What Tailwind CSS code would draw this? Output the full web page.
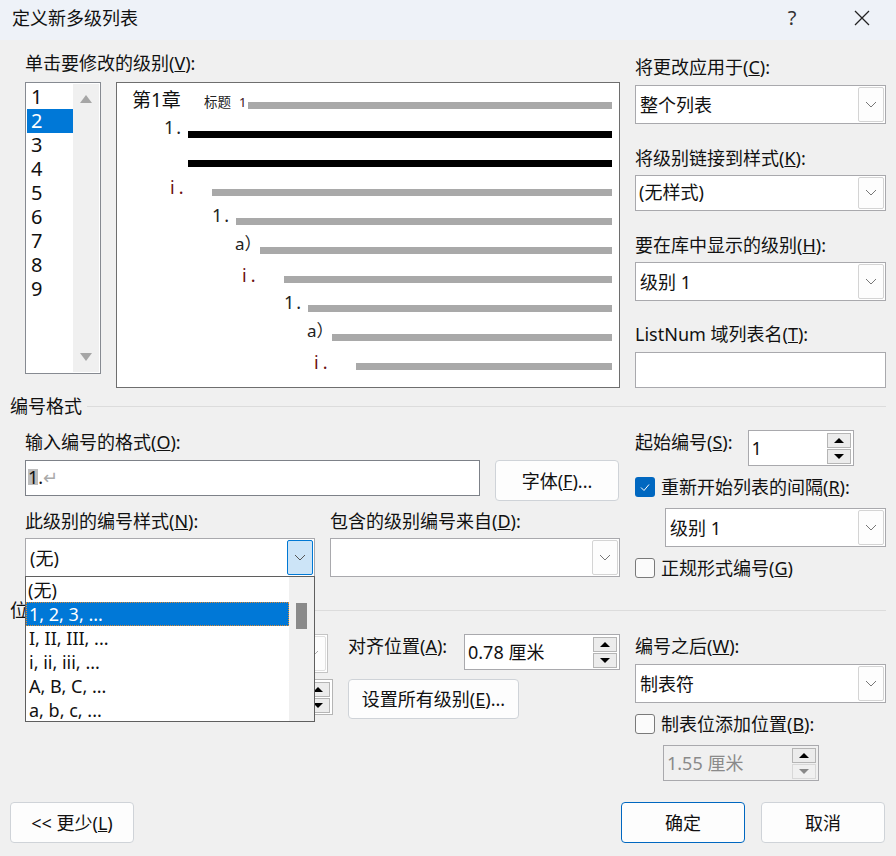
<!DOCTYPE html>
<html lang="zh-CN">
<head>
<meta charset="UTF-8">
<title>定义新多级列表</title>
<script src="https://cdn.jsdelivr.net/npm/@tailwindcss/browser@4"></script>
</head>
<body class="m-0 bg-[#f0f0f0]">
<div class="relative w-[896px] h-[856px] overflow-hidden bg-[#f0f0f0] text-[18px] leading-[24px] text-[#111] font-['Noto_Sans','Noto_Sans_CJK_SC',sans-serif]">

  <!-- title bar -->
  <div class="h-10 bg-[#eef2f8] flex items-center pl-3 pb-[5px]">
    <span class="flex-1">定义新多级列表</span>
    <span class="w-6 text-center text-[20px] text-[#333] mr-[50px]">?</span>
    <svg class="w-4 h-4 mr-[26px]" viewBox="0 0 16 16" fill="none" stroke="#222" stroke-width="1.3"><path d="M1 1l14 14M15 1L1 15"/></svg>
  </div>

  <!-- levels + preview + right fields -->
  <div class="flex pl-[25px] pt-[15px] gap-[15px]">
    <div class="w-[595px] shrink-0 -mt-[4px]">
      <div class="h-6 mb-[7px]">单击要修改的级别(<u>V</u>):</div>
      <div class="flex items-start gap-[15px]">
        <div class="w-[76px] h-[292px] bg-white border border-[#868a91] flex p-[1px] text-[20px]">
          <div class="flex-1 pt-[1px]">
            <div class="h-6 pl-[4px]">1</div>
            <div class="h-6 pl-[4px] bg-[#0078d7] text-white">2</div>
            <div class="h-6 pl-[4px]">3</div>
            <div class="h-6 pl-[4px]">4</div>
            <div class="h-6 pl-[4px]">5</div>
            <div class="h-6 pl-[4px]">6</div>
            <div class="h-6 pl-[4px]">7</div>
            <div class="h-6 pl-[4px]">8</div>
            <div class="h-6 pl-[4px]">9</div>
          </div>
          <div class="w-[26px] bg-[#f0f0f0] flex flex-col justify-between items-center py-[11px]">
            <svg class="w-3 h-2" viewBox="0 0 12 8" fill="#a6a6a6"><path d="M6 0l6 8H0z"/></svg>
            <svg class="w-3 h-2" viewBox="0 0 12 8" fill="#a6a6a6"><path d="M0 0h12L6 8z"/></svg>
          </div>
        </div>
        <div class="w-[504px] h-[306px] bg-white border border-[#6e6e6e] relative text-[#222]">
          <span class="absolute left-[15px] top-[5px] text-[19px] text-[#111]">第1章</span>
          <span class="absolute left-[87px] top-[7px] text-[13.5px]">标题</span>
          <span class="absolute left-[122px] top-[7px] text-[13px] text-[#401020]">1</span>
          <div class="absolute left-[131px] right-[7px] top-[19px] h-[7px] bg-[#a9a9a9]"></div>

          <span class="absolute left-[47px] top-[32px] tracking-[2px]">1.</span>
          <div class="absolute left-[71px] right-[7px] top-[48px] h-[7px] bg-black"></div>
          <div class="absolute left-[71px] right-[7px] top-[77px] h-[7px] bg-black"></div>

          <span class="absolute left-[53px] top-[92px] tracking-[4px] text-[#6b0f0f]">i.</span>
          <div class="absolute left-[95px] right-[7px] top-[106px] h-[7px] bg-[#a9a9a9]"></div>

          <span class="absolute left-[95px] top-[120px] tracking-[2px]">1.</span>
          <div class="absolute left-[119px] right-[7px] top-[135px] h-[7px] bg-[#a9a9a9]"></div>

          <span class="absolute left-[118px] top-[149px] text-[17px]">a）</span>
          <div class="absolute left-[143px] right-[7px] top-[164px] h-[7px] bg-[#a9a9a9]"></div>

          <span class="absolute left-[125px] top-[180px] tracking-[4px] text-[#6b0f0f]">i.</span>
          <div class="absolute left-[167px] right-[7px] top-[193px] h-[7px] bg-[#a9a9a9]"></div>

          <span class="absolute left-[167px] top-[207px] tracking-[2px]">1.</span>
          <div class="absolute left-[191px] right-[7px] top-[222px] h-[7px] bg-[#a9a9a9]"></div>

          <span class="absolute left-[190px] top-[236px] text-[17px]">a）</span>
          <div class="absolute left-[215px] right-[7px] top-[251px] h-[7px] bg-[#a9a9a9]"></div>

          <span class="absolute left-[197px] top-[267px] tracking-[4px] text-[#6b0f0f]">i.</span>
          <div class="absolute left-[239px] right-[7px] top-[280px] h-[7px] bg-[#a9a9a9]"></div>
        </div>
      </div>
    </div>

    <div class="w-[251px] shrink-0">
      <div class="h-6 mb-[6px]">将更改应用于(<u>C</u>):</div>
      <div class="h-[39px] bg-white border border-[#a9a9ad] flex items-center pl-[4px] pr-[1px] mb-[22px]">
        <span class="flex-1">整个列表</span>
        <div class="w-[26px] h-[35px] bg-[#fdfdfd] border border-[#d4d4d4] rounded-[2px] flex items-center justify-center">
          <svg class="w-3 h-2" viewBox="0 0 12 8" fill="none" stroke="#777"><path d="M1 1l5 5 5-5"/></svg>
        </div>
      </div>
      <div class="h-6 mb-[5px]">将级别链接到样式(<u>K</u>):</div>
      <div class="h-[36px] bg-white border border-[#a9a9ad] flex items-center pl-[3px] pr-[1px] mb-[22px]">
        <span class="flex-1 pb-[3px]">(无样式)</span>
        <div class="w-[26px] h-[32px] bg-[#fdfdfd] border border-[#d4d4d4] rounded-[2px] flex items-center justify-center">
          <svg class="w-3 h-2" viewBox="0 0 12 8" fill="none" stroke="#777"><path d="M1 1l5 5 5-5"/></svg>
        </div>
      </div>
      <div class="h-6 mb-[5px]">要在库中显示的级别(<u>H</u>):</div>
      <div class="h-[39px] bg-white border border-[#a9a9ad] flex items-center pl-[4px] pr-[1px] mb-[21px]">
        <span class="flex-1">级别 1</span>
        <div class="w-[26px] h-[35px] bg-[#fdfdfd] border border-[#d4d4d4] rounded-[2px] flex items-center justify-center">
          <svg class="w-3 h-2" viewBox="0 0 12 8" fill="none" stroke="#777"><path d="M1 1l5 5 5-5"/></svg>
        </div>
      </div>
      <div class="h-6 mb-[6px]">ListNum 域列表名(<u>T</u>):</div>
      <div class="h-[36px] bg-white border border-[#a9a9ad]"></div>
    </div>
  </div>

  <!-- number format -->
  <div class="flex items-center gap-[5px] pl-[10px] pr-[10px] mt-[6px] h-6">
    <span>编号格式</span>
    <div class="flex-1 h-[1px] bg-[#dcdcdc]"></div>
  </div>
  <div class="flex pl-[25px] pt-[12px] gap-[15px]">
    <div class="w-[595px] shrink-0">
      <div class="h-6 mb-[6px]">输入编号的格式(<u>O</u>):</div>
      <div class="flex gap-[15px] items-start">
        <div class="w-[455px] h-[36px] bg-white border border-[#7d8188] pl-[2px] pt-[8px] flex items-start leading-[16px]">
          <span class="bg-[#bdbdbd] h-[16px]">1</span><span class="h-[16px]">.</span><span class="h-[16px] text-[#aaa]">↵</span>
        </div>
        <div class="w-[124px] h-[41px] bg-[#fdfdfd] border border-[#cfd3d8] rounded-[4px] flex items-center justify-center">字体(<u>F</u>)...</div>
      </div>
      <div class="flex gap-[15px] mt-[8px]">
        <div class="w-[290px] shrink-0">
          <div class="h-6 mb-[5px]">此级别的编号样式(<u>N</u>):</div>
          <div class="h-[39px] bg-white border border-[#a9a9ad] flex items-center pl-[4px] pr-[1px]">
            <span class="flex-1">(无)</span>
            <div class="w-[26px] h-[35px] bg-[#cce4f7] border border-[#0078d4] rounded-[2px] flex items-center justify-center">
              <svg class="w-3 h-2" viewBox="0 0 12 8" fill="none" stroke="#555"><path d="M1 1l5 5 5-5"/></svg>
            </div>
          </div>
        </div>
        <div class="w-[290px] shrink-0">
          <div class="h-6 mb-[5px]">包含的级别编号来自(<u>D</u>):</div>
          <div class="h-[39px] bg-white border border-[#a9a9ad] flex items-center justify-end pr-[1px]">
            <div class="w-[26px] h-[35px] bg-[#fdfdfd] border border-[#d4d4d4] rounded-[2px] flex items-center justify-center">
              <svg class="w-3 h-2" viewBox="0 0 12 8" fill="none" stroke="#777"><path d="M1 1l5 5 5-5"/></svg>
            </div>
          </div>
        </div>
      </div>
    </div>

    <div class="w-[251px] shrink-0">
      <div class="flex items-start gap-[15px] mb-[9px]">
        <span class="h-6">起始编号(<u>S</u>):</span>
        <div class="w-[106px] h-[36px] bg-white border border-[#a9a9ad] flex items-center pl-[3px] pr-[2px]">
          <span class="flex-1">1</span>
          <div class="flex flex-col w-[24px] gap-[1px]">
            <div class="h-[15px] bg-[#ececec] border border-[#b5b5b5] flex items-center justify-center"><svg class="w-[10px] h-[5px]" viewBox="0 0 10 5"><path d="M5 0l5 5H0z"/></svg></div>
            <div class="h-[15px] bg-[#ececec] border border-[#b5b5b5] flex items-center justify-center"><svg class="w-[10px] h-[5px]" viewBox="0 0 10 5"><path d="M0 0h10L5 5z"/></svg></div>
          </div>
        </div>
      </div>
      <div class="flex items-center gap-[6px] h-6 mb-[9px]">
        <div class="w-5 h-5 bg-[#0067c0] rounded-[3px] flex items-center justify-center">
          <svg class="w-3 h-3" viewBox="0 0 12 12" fill="none" stroke="#fff"><path d="M2 6.500l3 3 5-6"/></svg>
        </div>
        <span>重新开始列表的间隔(<u>R</u>):</span>
      </div>
      <div class="ml-[30px] h-[39px] bg-white border border-[#a9a9ad] flex items-center pl-[4px] pr-[1px] mb-[9px]">
        <span class="flex-1">级别 1</span>
        <div class="w-[26px] h-[35px] bg-[#fdfdfd] border border-[#d4d4d4] rounded-[2px] flex items-center justify-center">
          <svg class="w-3 h-2" viewBox="0 0 12 8" fill="none" stroke="#777"><path d="M1 1l5 5 5-5"/></svg>
        </div>
      </div>
      <div class="flex items-center gap-[6px] h-6">
        <div class="w-5 h-5 bg-[#fbfbfb] border border-[#7a7a7a] rounded-[3px]"></div>
        <span>正规形式编号(<u>G</u>)</span>
      </div>
    </div>
  </div>

  <!-- position -->
  <div class="flex items-center gap-[5px] pl-[10px] pr-[10px] mt-[18px] h-6">
    <span>位置</span>
    <div class="flex-1 h-[1px] bg-[#dcdcdc]"></div>
  </div>
  <div class="flex pl-[25px] pt-[12px] gap-[15px]">
    <div class="w-[595px] shrink-0 flex">
      <!-- these two sit mostly behind the open dropdown -->
      <div class="w-[323px] shrink-0 flex flex-col items-end">
        <div class="w-[100px] h-[39px] mr-[20px] bg-white border border-[#c4c4c4] flex items-center justify-end pr-[1px]">
          <div class="w-[26px] h-[35px] bg-[#fdfdfd] border border-[#e0e0e0] rounded-[2px] flex items-center justify-center">
            <svg class="w-3 h-2" viewBox="0 0 12 8" fill="none" stroke="#aaa"><path d="M1 1l5 5 5-5"/></svg>
          </div>
        </div>
        <div class="w-[100px] h-[36px] mt-[6px] mr-[15px] bg-white border border-[#b5b5b5] flex items-center justify-end pr-[2px]">
          <div class="flex flex-col w-[24px] gap-[1px]">
            <div class="h-[15px] bg-[#ececec] border border-[#b5b5b5] flex items-center justify-center"><svg class="w-[10px] h-[5px]" viewBox="0 0 10 5"><path d="M5 0l5 5H0z"/></svg></div>
            <div class="h-[15px] bg-[#ececec] border border-[#b5b5b5] flex items-center justify-center"><svg class="w-[10px] h-[5px]" viewBox="0 0 10 5"><path d="M0 0h10L5 5z"/></svg></div>
          </div>
        </div>
      </div>
      <div class="w-[272px]">
        <div class="flex items-start h-[36px]">
          <span class="w-[116px] shrink-0">对齐位置(<u>A</u>):</span>
          <div class="w-[156px] h-[36px] bg-white border border-[#a9a9ad] flex items-center pl-[3px] pr-[2px]">
            <span class="flex-1">0.78 厘米</span>
            <div class="flex flex-col w-[24px] gap-[1px]">
              <div class="h-[15px] bg-[#ececec] border border-[#b5b5b5] flex items-center justify-center"><svg class="w-[10px] h-[5px]" viewBox="0 0 10 5"><path d="M5 0l5 5H0z"/></svg></div>
              <div class="h-[15px] bg-[#ececec] border border-[#b5b5b5] flex items-center justify-center"><svg class="w-[10px] h-[5px]" viewBox="0 0 10 5"><path d="M0 0h10L5 5z"/></svg></div>
            </div>
          </div>
        </div>
        <div class="w-[171px] h-[40px] mt-[9px] bg-[#fdfdfd] border border-[#cfd3d8] rounded-[4px] flex items-center justify-center">设置所有级别(<u>E</u>)...</div>
      </div>
    </div>
    <div class="w-[251px] shrink-0">
      <div class="h-6 mb-[6px]">编号之后(<u>W</u>):</div>
      <div class="h-[39px] bg-white border border-[#a9a9ad] flex items-center pl-[4px] pr-[1px] mb-[9px]">
        <span class="flex-1">制表符</span>
        <div class="w-[26px] h-[35px] bg-[#fdfdfd] border border-[#d4d4d4] rounded-[2px] flex items-center justify-center">
          <svg class="w-3 h-2" viewBox="0 0 12 8" fill="none" stroke="#777"><path d="M1 1l5 5 5-5"/></svg>
        </div>
      </div>
      <div class="flex items-center gap-[6px] h-6 mb-[9px]">
        <div class="w-5 h-5 bg-[#fbfbfb] border border-[#7a7a7a] rounded-[3px]"></div>
        <span>制表位添加位置(<u>B</u>):</span>
      </div>
      <div class="ml-[28px] w-[156px] h-[36px] bg-[#f0f0f0] border border-[#a9a9ad] flex items-center pl-[3px] pr-[2px] text-[#8a8a8a]">
        <span class="flex-1">1.55 厘米</span>
        <div class="flex flex-col w-[24px] gap-[1px]">
          <div class="h-[15px] bg-[#ececec] border border-[#b5b5b5] flex items-center justify-center"><svg class="w-[10px] h-[5px]" viewBox="0 0 10 5"><path d="M5 0l5 5H0z"/></svg></div>
          <div class="h-[15px] bg-[#f0f0f0] border border-[#d8d8d8] flex items-center justify-center"><svg class="w-[10px] h-[5px]" viewBox="0 0 10 5" fill="#888"><path d="M0 0h10L5 5z"/></svg></div>
        </div>
      </div>
    </div>
  </div>

  <!-- footer buttons -->
  <div class="absolute left-[10px] right-[11px] bottom-[13px] flex items-center">
    <div class="w-[124px] h-[41px] bg-[#fdfdfd] border border-[#cfd3d8] rounded-[4px] flex items-center justify-center">&lt;&lt; 更少(<u>L</u>)</div>
    <div class="flex-1"></div>
    <div class="w-[124px] h-[41px] bg-[#fdfdfd] border border-[#0067c0] rounded-[4px] flex items-center justify-center">确定</div>
    <div class="w-[124px] h-[41px] ml-[16px] bg-[#fdfdfd] border border-[#cfd3d8] rounded-[4px] flex items-center justify-center">取消</div>
  </div>

  <!-- open dropdown -->
  <div class="absolute left-[25px] top-[576px] w-[290px] h-[146px] bg-white border border-[#5f5f5f] flex z-10">
    <div class="flex-1 pt-[1px]">
      <div class="h-6 pl-[2px]">(无)</div>
      <div class="h-6 pl-[3px] bg-[#0078d7] text-white outline-1 -outline-offset-1 outline-dotted outline-[#e08a30]">1, 2, 3, ...</div>
      <div class="h-6 pl-[3px]">I, II, III, ...</div>
      <div class="h-6 pl-[3px]">i, ii, iii, ...</div>
      <div class="h-6 pl-[3px]">A, B, C, ...</div>
      <div class="h-6 pl-[3px]">a, b, c, ...</div>
    </div>
    <div class="w-[25px] bg-[#f0f0f0] pt-[26px] flex justify-center">
      <div class="w-[11px] h-[26px] bg-[#8a8a8a]"></div>
    </div>
  </div>
</div>
</body>
</html>
